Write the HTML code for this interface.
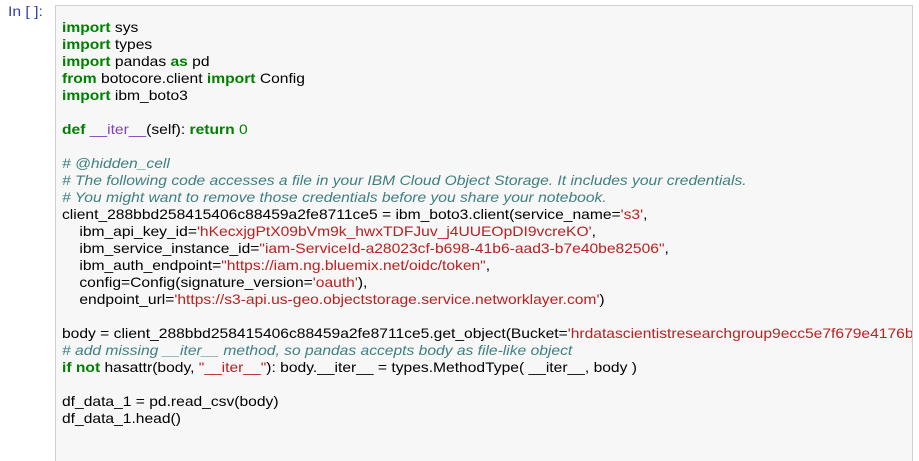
<!DOCTYPE html>
<html><head><meta charset="utf-8"><style>
html,body{margin:0;background:#fff;width:919px;height:461px;overflow:hidden;}
body{position:relative;font-family:"Liberation Sans","Noto Sans CJK JP",sans-serif;}
.prompt{position:absolute;left:8px;top:3px;font-size:14px;color:#303f9f;transform:scaleX(1.12);transform-origin:0 0;}
.box{position:absolute;left:55px;top:5px;width:856px;height:465px;background:#f7f7f7;border:1px solid #cfcfcf;overflow:hidden;}
pre{position:absolute;left:6px;top:13px;margin:0;font-family:inherit;font-size:14px;line-height:17px;color:#000;white-space:pre;transform:scaleX(1.115);transform-origin:0 0;}
.k{color:#008000;font-weight:bold}
.c{color:#408080;font-style:italic}
.s{color:#ba2121}
.f{color:#7f3fbf}
.n{color:#008000}
</style></head><body>
<div class="prompt">In [ ]:</div>
<div class="box"><pre><span class="k">import</span> sys
<span class="k">import</span> types
<span class="k">import</span> pandas <span class="k">as</span> pd
<span class="k">from</span> botocore.client <span class="k">import</span> Config
<span class="k">import</span> ibm_boto3

<span class="k">def</span> <span class="f">__iter__</span>(self): <span class="k">return</span> <span class="n">0</span>

<span class="c"># @hidden_cell</span>
<span class="c"># The following code accesses a file in your IBM Cloud Object Storage. It includes your credentials.</span>
<span class="c"># You might want to remove those credentials before you share your notebook.</span>
client_288bbd258415406c88459a2fe8711ce5 = ibm_boto3.client(service_name=<span class="s">'s3'</span>,
    ibm_api_key_id=<span class="s">'hKecxjgPtX09bVm9k_hwxTDFJuv_j4UUEOpDI9vcreKO'</span>,
    ibm_service_instance_id=<span class="s">"iam-ServiceId-a28023cf-b698-41b6-aad3-b7e40be82506"</span>,
    ibm_auth_endpoint=<span class="s">"https://iam.ng.bluemix.net/oidc/token"</span>,
    config=Config(signature_version=<span class="s">'oauth'</span>),
    endpoint_url=<span class="s">'https://s3-api.us-geo.objectstorage.service.networklayer.com'</span>)

body = client_288bbd258415406c88459a2fe8711ce5.get_object(Bucket=<span class="s">'hrdatascientistresearchgroup9ecc5e7f679e4176b</span>
<span class="c"># add missing __iter__ method, so pandas accepts body as file-like object</span>
<span class="k">if</span> <span class="k">not</span> hasattr(body, <span class="s">"__iter__"</span>): body.__iter__ = types.MethodType( __iter__, body )

df_data_1 = pd.read_csv(body)
df_data_1.head()
</pre></div>
</body></html>
